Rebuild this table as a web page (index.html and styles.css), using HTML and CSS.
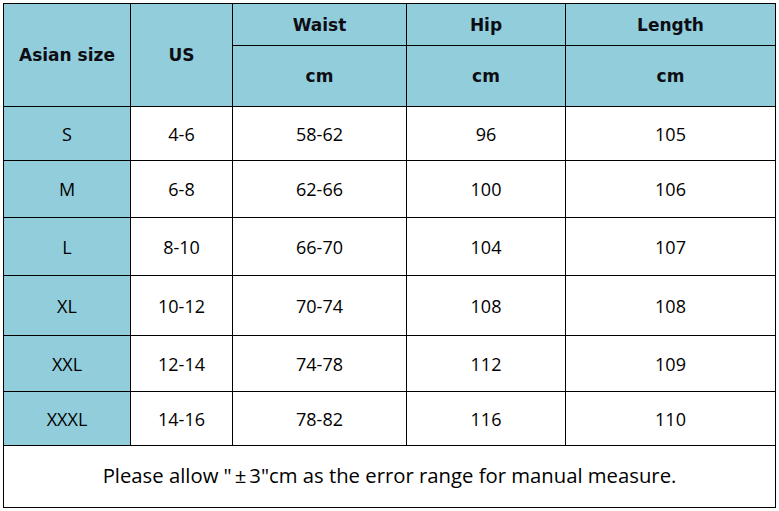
FILE: index.html
```html
<!DOCTYPE html>
<html>
<head>
<meta charset="utf-8">
<link rel="stylesheet" href="styles.css">
</head>
<body>
<div class="chart">
  <div class="cell hd span2">Asian size</div>
  <div class="cell hd span2">US</div>
  <div class="cell hd">Waist</div>
  <div class="cell hd">Hip</div>
  <div class="cell hd">Length</div>
  <div class="cell hd">cm</div>
  <div class="cell hd">cm</div>
  <div class="cell hd">cm</div>

  <div class="cell size">S</div><div class="cell">4-6</div><div class="cell">58-62</div><div class="cell">96</div><div class="cell">105</div>
  <div class="cell size">M</div><div class="cell">6-8</div><div class="cell">62-66</div><div class="cell">100</div><div class="cell">106</div>
  <div class="cell size">L</div><div class="cell">8-10</div><div class="cell">66-70</div><div class="cell">104</div><div class="cell">107</div>
  <div class="cell size">XL</div><div class="cell">10-12</div><div class="cell">70-74</div><div class="cell">108</div><div class="cell">108</div>
  <div class="cell size">XXL</div><div class="cell">12-14</div><div class="cell">74-78</div><div class="cell">112</div><div class="cell">109</div>
  <div class="cell size">XXXL</div><div class="cell">14-16</div><div class="cell">78-82</div><div class="cell">116</div><div class="cell">110</div>

  <div class="cell note">Please allow "<span class="pm">±</span>3"cm as the error range for manual measure.</div>
</div>
</body>
</html>
```

FILE: styles.css
```css
html, body {
  margin: 0;
  padding: 0;
  background: #ffffff;
}

body {
  width: 779px;
  height: 511px;
  overflow: hidden;
}

.chart {
  margin: 3px 0 0 3px;
  display: grid;
  grid-template-columns: 126px 101px 173px 158px 209px;
  grid-template-rows: 41px 60px 53px 56px 57px 59px 55px 53px 61px;
  gap: 1px;
  padding: 1px;
  background: #000000;
  width: max-content;
  font-family: "Open Sans", "Noto Sans", sans-serif;
  font-size: 18px;
  color: #000000;
}

.cell {
  background: #ffffff;
  display: flex;
  align-items: center;
  justify-content: center;
}

.hd {
  background: #92cddc;
  font-family: "DejaVu Sans", Verdana, sans-serif;
  font-weight: bold;
  font-size: 17px;
  color: #0d0d14;
}

.span2 {
  grid-row: span 2;
}

.size {
  background: #92cddc;
}

.note {
  grid-column: 1 / -1;
  font-size: 20.3px;
  padding-bottom: 3px;
  white-space: pre;
}

.pm {
  padding: 0 3px;
}
```
